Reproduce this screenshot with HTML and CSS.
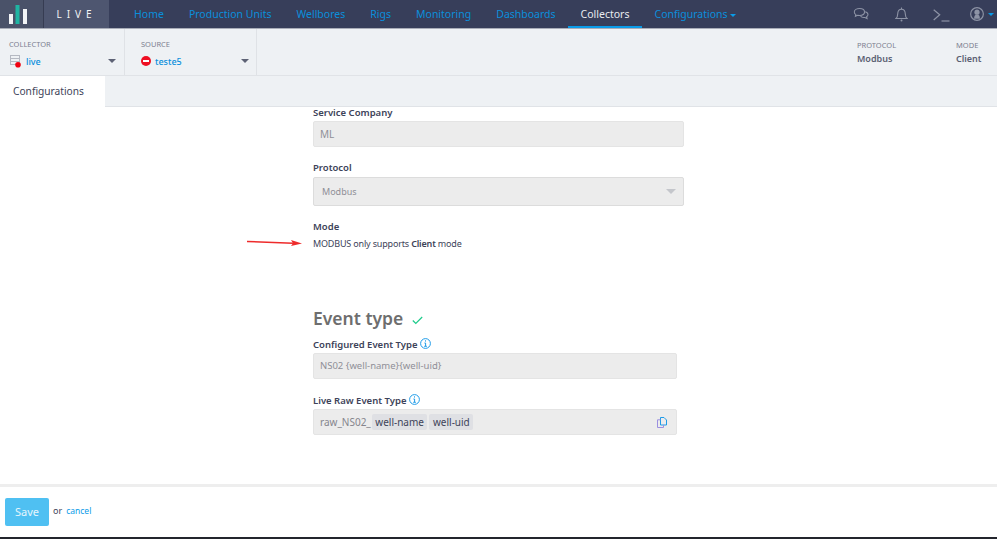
FILE: index.html
```html
<!DOCTYPE html>
<html lang="en">

<head>
    <meta charset="UTF-8">
    <meta name="viewport" content="width=device-width, initial-scale=1.0">
    <title>Collectors</title>
    <link rel="stylesheet" href="styles.css">
</head>

<body>

    <header class="topbar">
        <div class="logo-mark">
            <svg width="19" height="20" viewBox="0 0 19 20">
                <rect x="0" y="9" width="4" height="10" fill="#f2f4f6"/>
                <rect x="6.500" y="0" width="4" height="19" fill="#1fb5a3"/>
                <rect x="14" y="4" width="4" height="15" fill="#f2f4f6"/>
            </svg>
        </div>
        <div class="logo-word">LIVE</div>
        <nav class="main-nav">
            <a href="#">Home</a>
            <a href="#">Production Units</a>
            <a href="#">Wellbores</a>
            <a href="#">Rigs</a>
            <a href="#">Monitoring</a>
            <a href="#">Dashboards</a>
            <a href="#" class="active">Collectors</a>
            <a href="#">Configurations <span class="caret caret-blue"></span></a>
        </nav>
        <div class="top-icons">
            <svg class="chat-icon" width="16" height="14" viewBox="0 0 17 15" fill="none" stroke="#8d93a5" stroke-width="1.1">
                <path d="M7 1.500c-3 0-5.700 1.500-5.700 3.800 0 1.200.7 2.100 1.700 2.800l-.5 1.900 2.400-1.200c.7.2 1.400.2 2.100.2 3 0 5.300-1.500 5.300-3.700S10 1.500 7 1.500z"/>
                <path d="M13 5c1.700.5 3 1.600 3 3 0 1-.6 1.800-1.500 2.400l.5 2-2.300-1.200c-1.800.3-3.800-.2-4.700-1.500"/>
            </svg>
            <svg class="bell-icon" width="13" height="15" viewBox="0 0 13 15" fill="none" stroke="#8d93a5" stroke-width="1.100">
                <path d="M1 11.500c1.300-1 1.600-2.400 1.700-4.500C2.800 4 4.200 2.300 6.500 2.300S10.200 4 10.300 7c.1 2.100.4 3.500 1.700 4.500z"/>
                <path d="M6.500.5v1.800"/>
                <circle cx="6.500" cy="13.500" r="1" fill="#8d93a5" stroke="none"/>
            </svg>
            <svg class="term-icon" width="17" height="13" viewBox="0 0 17 13" fill="none" stroke="#8d93a5" stroke-width="1.200">
                <path d="M.7.800l6 5-6 5.200"/>
                <path d="M8.500 12h8"/>
            </svg>
            <div class="user-menu">
                <svg width="14" height="14" viewBox="0 0 13 13">
                    <circle cx="6.500" cy="6.500" r="5.900" fill="none" stroke="#8d93a5" stroke-width="1.100"/>
                    <circle cx="6.500" cy="4.800" r="2.400" fill="#8d93a5"/>
                    <path d="M3.800 11c0-3 .9-4 2.700-4s2.700 1 2.700 4z" fill="#8d93a5"/>
                </svg>
                <span class="caret caret-blue"></span>
            </div>
        </div>
    </header>

    <section class="subbar">
        <div class="picker picker-collector">
            <div class="small-label">COLLECTOR</div>
            <div class="picker-value">
                <svg width="13" height="13" viewBox="0 0 13 13">
                    <rect x="1.500" y="0.500" width="9" height="9" fill="none" stroke="#b5b9c2"/>
                    <path d="M1.500 3.500h9M1.500 6.500h9" stroke="#b5b9c2"/>
                    <circle cx="9" cy="9.800" r="2.800" fill="#f0000f"/>
                </svg>
                <a href="#">live</a>
                <span class="caret caret-grey"></span>
            </div>
        </div>
        <div class="picker picker-source">
            <div class="small-label">SOURCE</div>
            <div class="picker-value">
                <svg width="10" height="10" viewBox="0 0 10 10">
                    <circle cx="5" cy="5" r="5" fill="#ee0f22"/>
                    <rect x="2" y="4" width="6" height="2" fill="#fff"/>
                </svg>
                <a href="#">teste5</a>
                <span class="caret caret-grey"></span>
            </div>
        </div>
        <div class="info info-protocol">
            <div class="small-label">PROTOCOL</div>
            <div class="info-value">Modbus</div>
        </div>
        <div class="info info-mode">
            <div class="small-label">MODE</div>
            <div class="info-value">Client</div>
        </div>
    </section>

    <div class="tabbar">
        <div class="tab">Configurations</div>
    </div>

    <main class="content">
        <div class="form-col">
            <label class="field-label">Service Company</label>
            <div class="input-box box-service">ML</div>

            <label class="field-label label-gap">Protocol</label>
            <div class="input-box box-select">Modbus <span class="caret caret-light"></span></div>

            <label class="field-label label-gap">Mode</label>
            <p class="mode-note">MODBUS only supports <b>Client</b> mode</p>

            <h2 class="section-title">Event type
                <svg width="11" height="9" viewBox="0 0 11 9" fill="none" stroke="#1ecb8b" stroke-width="1.200">
                    <path d="M.8 4.500l3 3L10.200 1"/>
                </svg>
            </h2>

            <div class="event-group">
                <label class="field-label">Configured Event Type
                    <svg class="info-icon" width="11" height="11" viewBox="0 0 11 11">
                        <circle cx="5.500" cy="5.500" r="4.900" fill="none" stroke="#1e9be8"/>
                        <path d="M5.500 2.300v1.300M4.400 5h1.200v3M4.200 8.300h2.700" fill="none" stroke="#1e9be8"/>
                    </svg>
                </label>
                <div class="input-box box-event box-configured">NS02 {well-name}{well-uid}</div>

                <label class="field-label label-raw">Live Raw Event Type
                    <svg class="info-icon" width="11" height="11" viewBox="0 0 11 11">
                        <circle cx="5.500" cy="5.500" r="4.900" fill="none" stroke="#1e9be8"/>
                        <path d="M5.500 2.300v1.300M4.400 5h1.200v3M4.200 8.300h2.700" fill="none" stroke="#1e9be8"/>
                    </svg>
                </label>
                <div class="input-box box-event box-raw">
                    <span>raw_NS02_</span>
                    <span class="tag">well-name</span>
                    <span class="tag">well-uid</span>
                    <svg class="copy-icon" width="10" height="11" viewBox="0 0 10 11" fill="none" stroke="#1e9be8">
                        <path d="M3.500.5h3.500l2.500 2.500v5h-6z"/>
                        <path d="M3.500 2.800H.5v7.700h6V8" stroke="#9b8fe0"/>
                    </svg>
                </div>
            </div>
        </div>
    </main>

    <footer class="savebar">
        <button class="save-btn">Save</button>
        <span class="or-text">or</span>
        <a href="#" class="cancel-link">cancel</a>
    </footer>

    <!-- annotation drawn over the screenshot -->
    <svg class="red-arrow" width="56" height="8" viewBox="0 0 56 8">
        <path d="M0 2.500L46 4.200" stroke="#ee2b2b" stroke-width="1.500"/>
        <path d="M44 1l11 3.500L44 7l2-2.800z" fill="#ee2b2b"/>
    </svg>

</body>

</html>
```

FILE: styles.css
```css
* {
    box-sizing: border-box;
}

html, body {
    height: 100%;
}

body {
    margin: 0;
    width: 997px;
    height: 539px;
    overflow: hidden;
    position: relative;
    font-family: "Noto Sans", Arial, sans-serif;
    font-size: 10px;
    color: #3d4359;
    background-color: #fff;
    display: flex;
    flex-direction: column;
    border-bottom: 2px solid #23252d;
}

a {
    text-decoration: none;
}

/* Top bar */
.topbar {
    height: 29px;
    flex-shrink: 0;
    display: flex;
    background-color: #373e5a;
    border-bottom: 1px solid #a9adb8;
}

.logo-mark {
    width: 44px;
    background-color: #4a5269;
    border-right: 1px solid #363c52;
    padding: 5px 0 0 9px;
}

.logo-word {
    width: 65px;
    background-color: #4e5670;
    color: #f2f4f6;
    font-size: 10px;
    letter-spacing: 5px;
    text-align: center;
    line-height: 28px;
}

.main-nav {
    display: flex;
    margin-left: 12.500px;
}

.main-nav a {
    color: #0a8fdc;
    font-size: 10.500px;
    line-height: 28px;
    padding: 0 12.500px;
    white-space: nowrap;
}

.main-nav a.active {
    color: #e9ebef;
    border-bottom: 2px solid #0a9be8;
}

.top-icons {
    margin-left: auto;
    display: flex;
    align-items: center;
    padding-right: 3px;
}

.chat-icon {
    margin-right: 26px;
}

.bell-icon {
    margin-right: 25px;
}

.term-icon {
    margin-right: 20px;
    margin-top: 2px;
}

.user-menu {
    display: flex;
    align-items: center;
    gap: 4px;
}

.caret {
    display: inline-block;
    width: 0;
    height: 0;
    border-left: 3.500px solid transparent;
    border-right: 3.500px solid transparent;
    border-top: 3.500px solid #000;
    vertical-align: middle;
}

.caret-blue {
    border-top-color: #0a9be8;
}

.caret-grey {
    border-left-width: 4px;
    border-right-width: 4px;
    border-top-width: 4px;
    border-top-color: #5d6275;
}

.caret-light {
    border-left-width: 5px;
    border-right-width: 5px;
    border-top-width: 5px;
    border-top-color: #c4c6cb;
}

/* Collector / source strip */
.subbar {
    height: 47px;
    flex-shrink: 0;
    display: flex;
    background-color: #eef1f4;
    border-bottom: 1px solid #e0e3e7;
}

.small-label {
    font-size: 7.500px;
    color: #7c8090;
    line-height: 11px;
}

.picker {
    width: 125px;
    padding: 10px 8px 0 9px;
    border-right: 1px solid #dfe2e6;
}

.picker-source {
    width: 132px;
    padding: 10px 7px 0 16px;
}

.picker-value {
    display: flex;
    align-items: center;
    gap: 4px;
    margin-top: 4px;
    height: 14px;
}

.picker-value a {
    color: #0a8fdc;
    font-size: 9px;
    font-weight: 500;
}

.picker-value .caret {
    margin-left: auto;
}

.info {
    padding-top: 11px;
}

.info-protocol {
    margin-left: auto;
    width: 99px;
}

.info-mode {
    width: 41px;
}

.info-value {
    font-size: 9px;
    font-weight: 600;
    line-height: 12px;
    color: #5a5f72;
    margin-top: 2px;
}

/* Tabs */
.tabbar {
    height: 31px;
    flex-shrink: 0;
    background-color: #eef1f4;
    border-bottom: 1px solid #e0e3e7;
}

.tab {
    width: 105px;
    height: 31px;
    padding-left: 13px;
    background-color: #fff;
    font-size: 10.200px;
    line-height: 30px;
    color: #3d4359;
}

/* Form */
.content {
    flex: 1;
    overflow: hidden;
}

.form-col {
    width: 371px;
    margin-left: 313px;
}

.field-label {
    display: block;
    font-size: 9.500px;
    font-weight: 600;
    line-height: 11px;
    color: #3d4359;
}

.label-gap {
    margin-top: 15px;
}

.input-box {
    background-color: #ececec;
    border: 1px solid #e4e4e4;
    border-radius: 2px;
    color: #8f8f97;
    font-size: 10px;
}

.box-service {
    height: 26px;
    line-height: 24px;
    margin-top: 3px;
    padding-left: 6px;
}

.box-select {
    height: 29px;
    line-height: 27px;
    margin-top: 4px;
    padding: 0 7px 0 8px;
    font-size: 9px;
    display: flex;
    align-items: center;
    justify-content: space-between;
    border-color: #dcdcdc;
}

.mode-note {
    margin: 5px 0 0;
    font-size: 9px;
    letter-spacing: -0.170px;
    line-height: 13px;
    color: #3d4359;
}

.mode-note b {
    font-weight: 600;
}

.section-title {
    margin: 56px 0 0;
    font-size: 17.500px;
    line-height: 24px;
    font-weight: 600;
    color: #6e6e6e;
}

.section-title svg {
    margin-left: 4px;
}

.event-group {
    width: 364px;
    margin-top: 8px;
}

.info-icon {
    vertical-align: -1px;
}

.box-event {
    height: 26px;
    line-height: 24px;
    margin-top: 3px;
    padding-left: 6px;
}

.box-configured {
    font-size: 9.500px;
}

.label-raw {
    margin-top: 15px;
}

.box-raw {
    display: flex;
    align-items: center;
    gap: 1px;
    padding-right: 9px;
    color: #85858d;
}

.box-raw .tag + .tag {
    margin-left: 1px;
}

.tag {
    background-color: #dfe0e4;
    color: #3d4359;
    border-radius: 2px;
    height: 16px;
    line-height: 16px;
    padding: 0 3.500px;
}

.copy-icon {
    margin-left: auto;
}

/* Footer */
.savebar {
    height: 53px;
    flex-shrink: 0;
    display: flex;
    align-items: center;
    padding: 0 5px 1px;
    border-top: 3px solid #eeeeee;
}

.save-btn {
    width: 44px;
    height: 28px;
    background-color: #4fc0f2;
    color: #e6f6fd;
    border: none;
    border-radius: 2px;
    font-family: inherit;
    font-size: 11px;
    padding: 0;
    cursor: pointer;
}

.or-text {
    margin: -2px 0 0 4px;
    font-size: 9px;
    color: #3d4359;
}

.cancel-link {
    margin: -2px 0 0 4px;
    font-size: 8.500px;
    color: #0a9be8;
}

.red-arrow {
    position: absolute;
    left: 247px;
    top: 239px;
}
```
